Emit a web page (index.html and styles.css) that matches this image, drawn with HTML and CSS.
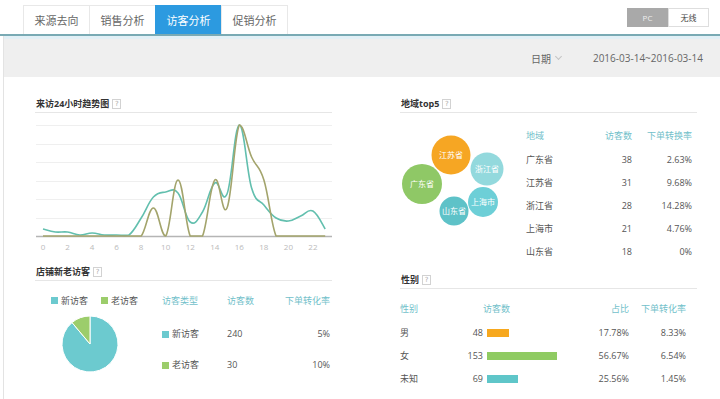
FILE: index.html
```html
<!DOCTYPE html>
<html lang="zh-CN">
<head>
    <meta charset="UTF-8">
    <meta name="viewport" content="width=device-width, initial-scale=1.0">
    <title>访客分析</title>
    <link rel="stylesheet" href="styles.css">
</head>
<body>
    <div class="top-bar">
        <div class="tabs">
            <a class="tab">来源去向</a>
            <a class="tab">销售分析</a>
            <a class="tab active">访客分析</a>
            <a class="tab">促销分析</a>
        </div>
        <div class="device-switch">
            <a class="on">PC</a>
            <a>无线</a>
        </div>
    </div>
    <div class="main">
        <div class="date-bar">
            <span class="date-label">日期<i class="chevron"></i></span>
            <span class="date-range">2016-03-14~2016-03-14</span>
        </div>
        <div class="content">
            <div class="column">
                <div class="section-head"><span>来访24小时趋势图</span><i class="help">?</i></div>
                <svg class="trend" id="trend" width="297" height="145"></svg>

                <div class="section-head spaced-small"><span>店铺新老访客</span><i class="help">?</i></div>
                <div class="visitor-body">
                    <div class="pie-box">
                        <div class="legend">
                            <span><i class="sq teal"></i>新访客</span>
                            <span><i class="sq green"></i>老访客</span>
                        </div>
                        <svg class="pie" width="56" height="56" viewBox="0 0 56 56">
                            <path d="M28,28 L28,0 A28,28 0 1,1 10,6.55 Z" fill="#6ccacf" stroke="#fff" stroke-width="1"/>
                            <path d="M28,28 L10,6.55 A28,28 0 0,1 28,0 Z" fill="#9ccd6b" stroke="#fff" stroke-width="1"/>
                        </svg>
                    </div>
                    <div class="visitor-table">
                        <div class="row head"><span>访客类型</span><span>访客数</span><span class="num">下单转化率</span></div>
                        <div class="rows">
                            <div class="row"><span><i class="sq teal"></i>新访客</span><span>240</span><span class="num">5%</span></div>
                            <div class="row"><span><i class="sq green"></i>老访客</span><span>30</span><span class="num">10%</span></div>
                        </div>
                    </div>
                </div>
            </div>

            <div class="column">
                <div class="section-head"><span>地域top5</span><i class="help">?</i></div>
                <div class="region-body">
                    <svg class="bubbles" width="122" height="150">
                        <circle cx="51" cy="42" r="19.5" fill="#f6a623"/>
                        <text x="51" y="45">江苏省</text>
                        <circle cx="87" cy="56" r="16.5" fill="#93d9dd"/>
                        <text x="87" y="59">浙江省</text>
                        <circle cx="22" cy="71" r="20" fill="#8fc866"/>
                        <text x="22" y="74">广东省</text>
                        <circle cx="83" cy="89" r="15" fill="#6dcfd7"/>
                        <text x="83" y="92">上海市</text>
                        <circle cx="54" cy="98" r="14.5" fill="#5ec2c8"/>
                        <text x="54" y="101">山东省</text>
                    </svg>
                    <div class="region-table">
                        <div class="row head"><span>地域</span><span class="num">访客数</span><span class="num">下单转换率</span></div>
                        <div class="row"><span>广东省</span><span class="num">38</span><span class="num">2.63%</span></div>
                        <div class="row"><span>江苏省</span><span class="num">31</span><span class="num">9.68%</span></div>
                        <div class="row"><span>浙江省</span><span class="num">28</span><span class="num">14.28%</span></div>
                        <div class="row"><span>上海市</span><span class="num">21</span><span class="num">4.76%</span></div>
                        <div class="row"><span>山东省</span><span class="num">18</span><span class="num">0%</span></div>
                    </div>
                </div>

                <div class="section-head spaced"><span>性别</span><i class="help">?</i></div>
                <div class="gender-table">
                    <div class="row head"><span>性别</span><span></span><span>访客数</span><span class="num">占比</span><span class="num">下单转化率</span></div>
                    <div class="row"><span>男</span><span class="num">48</span><span><i class="bar orange" style="width: 22px;"></i></span><span class="num">17.78%</span><span class="num">8.33%</span></div>
                    <div class="row"><span>女</span><span class="num">153</span><span><i class="bar green" style="width: 70px;"></i></span><span class="num">56.67%</span><span class="num">6.54%</span></div>
                    <div class="row"><span>未知</span><span class="num">69</span><span><i class="bar teal" style="width: 31px;"></i></span><span class="num">25.56%</span><span class="num">1.45%</span></div>
                </div>
            </div>
        </div>
    </div>

    <script>
        document.addEventListener("DOMContentLoaded", function(){
            const svg = document.getElementById("trend");
            const ns = "http://www.w3.org/2000/svg";
            const top = 113, step = 12.27;

            // page y of each hour
            const teal = [229,232,232,235,233,235,235,235,218,197,192,193,222,212,183,194,125,188,205,218,221,216,211,229];
            const olive = [236,236,236,236,236,236,236,236,236,208,236,180,236,236,180,208,125,157,180,236,236,236,236,236];

            function el(name, attrs){
                const node = document.createElementNS(ns, name);
                for (const k in attrs) node.setAttribute(k, attrs[k]);
                svg.appendChild(node);
                return node;
            }

            [125,144,162,181,199,218].forEach(y => {
                el("line", {x1: 1, x2: 297, y1: y - top + 0.5, y2: y - top + 0.5, stroke: "#efefef"});
            });
            el("line", {x1: 1, x2: 297, y1: 123.5, y2: 123.5, stroke: "#b5b5b5", "stroke-width": 1.5});

            for (let h = 0; h < 24; h += 2){
                const t = el("text", {x: 8 + h * step, y: 137, class: "axis"});
                t.textContent = h;
            }

            function smooth(values){
                const pts = values.map((v, i) => [8 + i * step, v - top]);
                const lo = 12, hi = 123, k = 0.2;
                const clamp = y => Math.max(lo, Math.min(hi, y));
                let d = "M" + pts[0][0] + "," + pts[0][1];
                for (let i = 0; i < pts.length - 1; i++){
                    const p0 = pts[i - 1] || pts[i], p1 = pts[i], p2 = pts[i + 1], p3 = pts[i + 2] || p2;
                    const c1x = p1[0] + (p2[0] - p0[0]) * k, c1y = clamp(p1[1] + (p2[1] - p0[1]) * k);
                    const c2x = p2[0] - (p3[0] - p1[0]) * k, c2y = clamp(p2[1] - (p3[1] - p1[1]) * k);
                    d += " C" + c1x.toFixed(1) + "," + c1y.toFixed(1) + " " + c2x.toFixed(1) + "," + c2y.toFixed(1) + " " + p2[0].toFixed(1) + "," + p2[1];
                }
                return d;
            }

            el("path", {d: smooth(teal), fill: "none", stroke: "#62bfae", "stroke-width": 1.6});
            el("path", {d: smooth(olive), fill: "none", stroke: "#a3a46c", "stroke-width": 1.6});
        });
    </script>
</body>
</html>
```

FILE: styles.css
```css
*{
    margin: 0;
    padding: 0;
    box-sizing: border-box;
}
body{
    font-family: "Open Sans", "Noto Sans CJK SC", sans-serif;
    font-size: 9px;
    color: #555;
    background: #fff;
}
a{
    text-decoration: none;
    color: #555;
    cursor: pointer;
}
.top-bar{
    display: flex;
    justify-content: space-between;
    align-items: flex-start;
    height: 36px;
    padding: 5px 11px 0 23px;
    border-bottom: 2px solid #79aab4;
}
.tabs{
    display: flex;
}
.tab{
    display: flex;
    align-items: center;
    justify-content: center;
    width: 67px;
    height: 29px;
    margin-right: -1px;
    border: 1px solid #e8e8e8;
    border-bottom: none;
    font-size: 11px;
    color: #666;
}
.tab.active{
    background: #2c9ae0;
    border-color: #2c9ae0;
    color: #fff;
}
.device-switch{
    display: flex;
    margin-top: 3px;
}
.device-switch a{
    display: flex;
    align-items: center;
    justify-content: center;
    width: 41px;
    height: 19px;
    border: 1px solid #dedede;
    font-size: 8px;
    color: #444;
}
.device-switch a.on{
    background: #a9a9a9;
    border-color: #a9a9a9;
    color: #eee;
}
.main{
    margin-left: 3px;
    min-height: 363px;
    border-left: 1px solid #e3e3e3;
}
.date-bar{
    display: flex;
    justify-content: flex-end;
    align-items: center;
    gap: 32px;
    height: 41px;
    padding-right: 17px;
    background: #efefef;
    border-top: 3px solid #e2f0f6;
    font-size: 10px;
    color: #666;
}
.date-label{
    display: flex;
    align-items: center;
    gap: 5px;
}
.chevron{
    width: 5px;
    height: 5px;
    margin-top: -3px;
    border-right: 1px solid #c4c4c4;
    border-bottom: 1px solid #c4c4c4;
    transform: rotate(45deg);
}
.content{
    display: flex;
    gap: 68px;
    padding: 18px 0 0 31px;
}
.column{
    display: flex;
    flex-direction: column;
    width: 297px;
}
.section-head{
    display: flex;
    align-items: center;
    gap: 3px;
    height: 18px;
    padding-left: 1px;
    border-bottom: 1px solid #e6e6e6;
    font-weight: bold;
    color: #333;
}
.section-head.spaced-small{
    margin-top: 5px;
}
.section-head.spaced{
    margin-top: 8px;
}
.help{
    display: flex;
    align-items: center;
    justify-content: center;
    width: 9px;
    height: 10px;
    border: 1px solid #d2d2d2;
    font-family: "DejaVu Sans", sans-serif;
    font-style: normal;
    font-weight: normal;
    font-size: 7px;
    color: #aaa;
}
.trend{
    display: block;
}
.trend .axis{
    font-size: 8px;
    fill: #bbb;
    text-anchor: middle;
}
.num{
    text-align: right;
    white-space: nowrap;
}
.head{
    color: #72bfca;
}
.sq{
    display: inline-block;
    width: 7px;
    height: 7px;
    margin-right: 3px;
    vertical-align: -0.5px;
}
.sq.teal{
    background: #6ccacf;
}
.sq.green{
    background: #9ccd6b;
}

/* 新老访客 */
.visitor-body{
    display: flex;
}
.pie-box{
    width: 127px;
}
.legend{
    display: flex;
    align-items: center;
    gap: 13px;
    height: 26px;
    margin-top: 6px;
    padding-left: 16px;
}
.pie{
    display: block;
    margin: 3px 0 0 27px;
}
.visitor-table{
    width: 168px;
}
.visitor-table .row{
    display: grid;
    grid-template-columns: 65px 48px 55px;
    align-items: center;
    height: 31px;
}
.visitor-table .row.head{
    height: 26px;
    margin-top: 6px;
}
.visitor-table .rows{
    margin-top: 5px;
}

/* 地域 */
.region-body{
    display: flex;
}
.bubbles{
    display: block;
}
.bubbles text{
    font-size: 8px;
    fill: #fff;
    text-anchor: middle;
}
.region-table{
    width: 172px;
    padding-top: 9px;
}
.region-table .row{
    display: grid;
    grid-template-columns: 60px 50px 60px;
    align-items: center;
    height: 23px;
}
.region-table .row > span:first-child{
    padding-left: 4px;
}
.region-table .row.head{
    height: 26px;
}

/* 性别 */
.gender-table{
    margin-top: 6px;
}
.gender-table .row{
    display: grid;
    grid-template-columns: 50px 33px 106px 40px 57px;
    align-items: center;
    height: 23px;
}
.gender-table .row.head{
    height: 26px;
}
.bar{
    display: block;
    height: 8px;
    margin-left: 4px;
}
.bar.orange{
    background: #f7a81e;
}
.bar.green{
    background: #8fcb62;
}
.bar.teal{
    background: #5fc6c9;
}
```
